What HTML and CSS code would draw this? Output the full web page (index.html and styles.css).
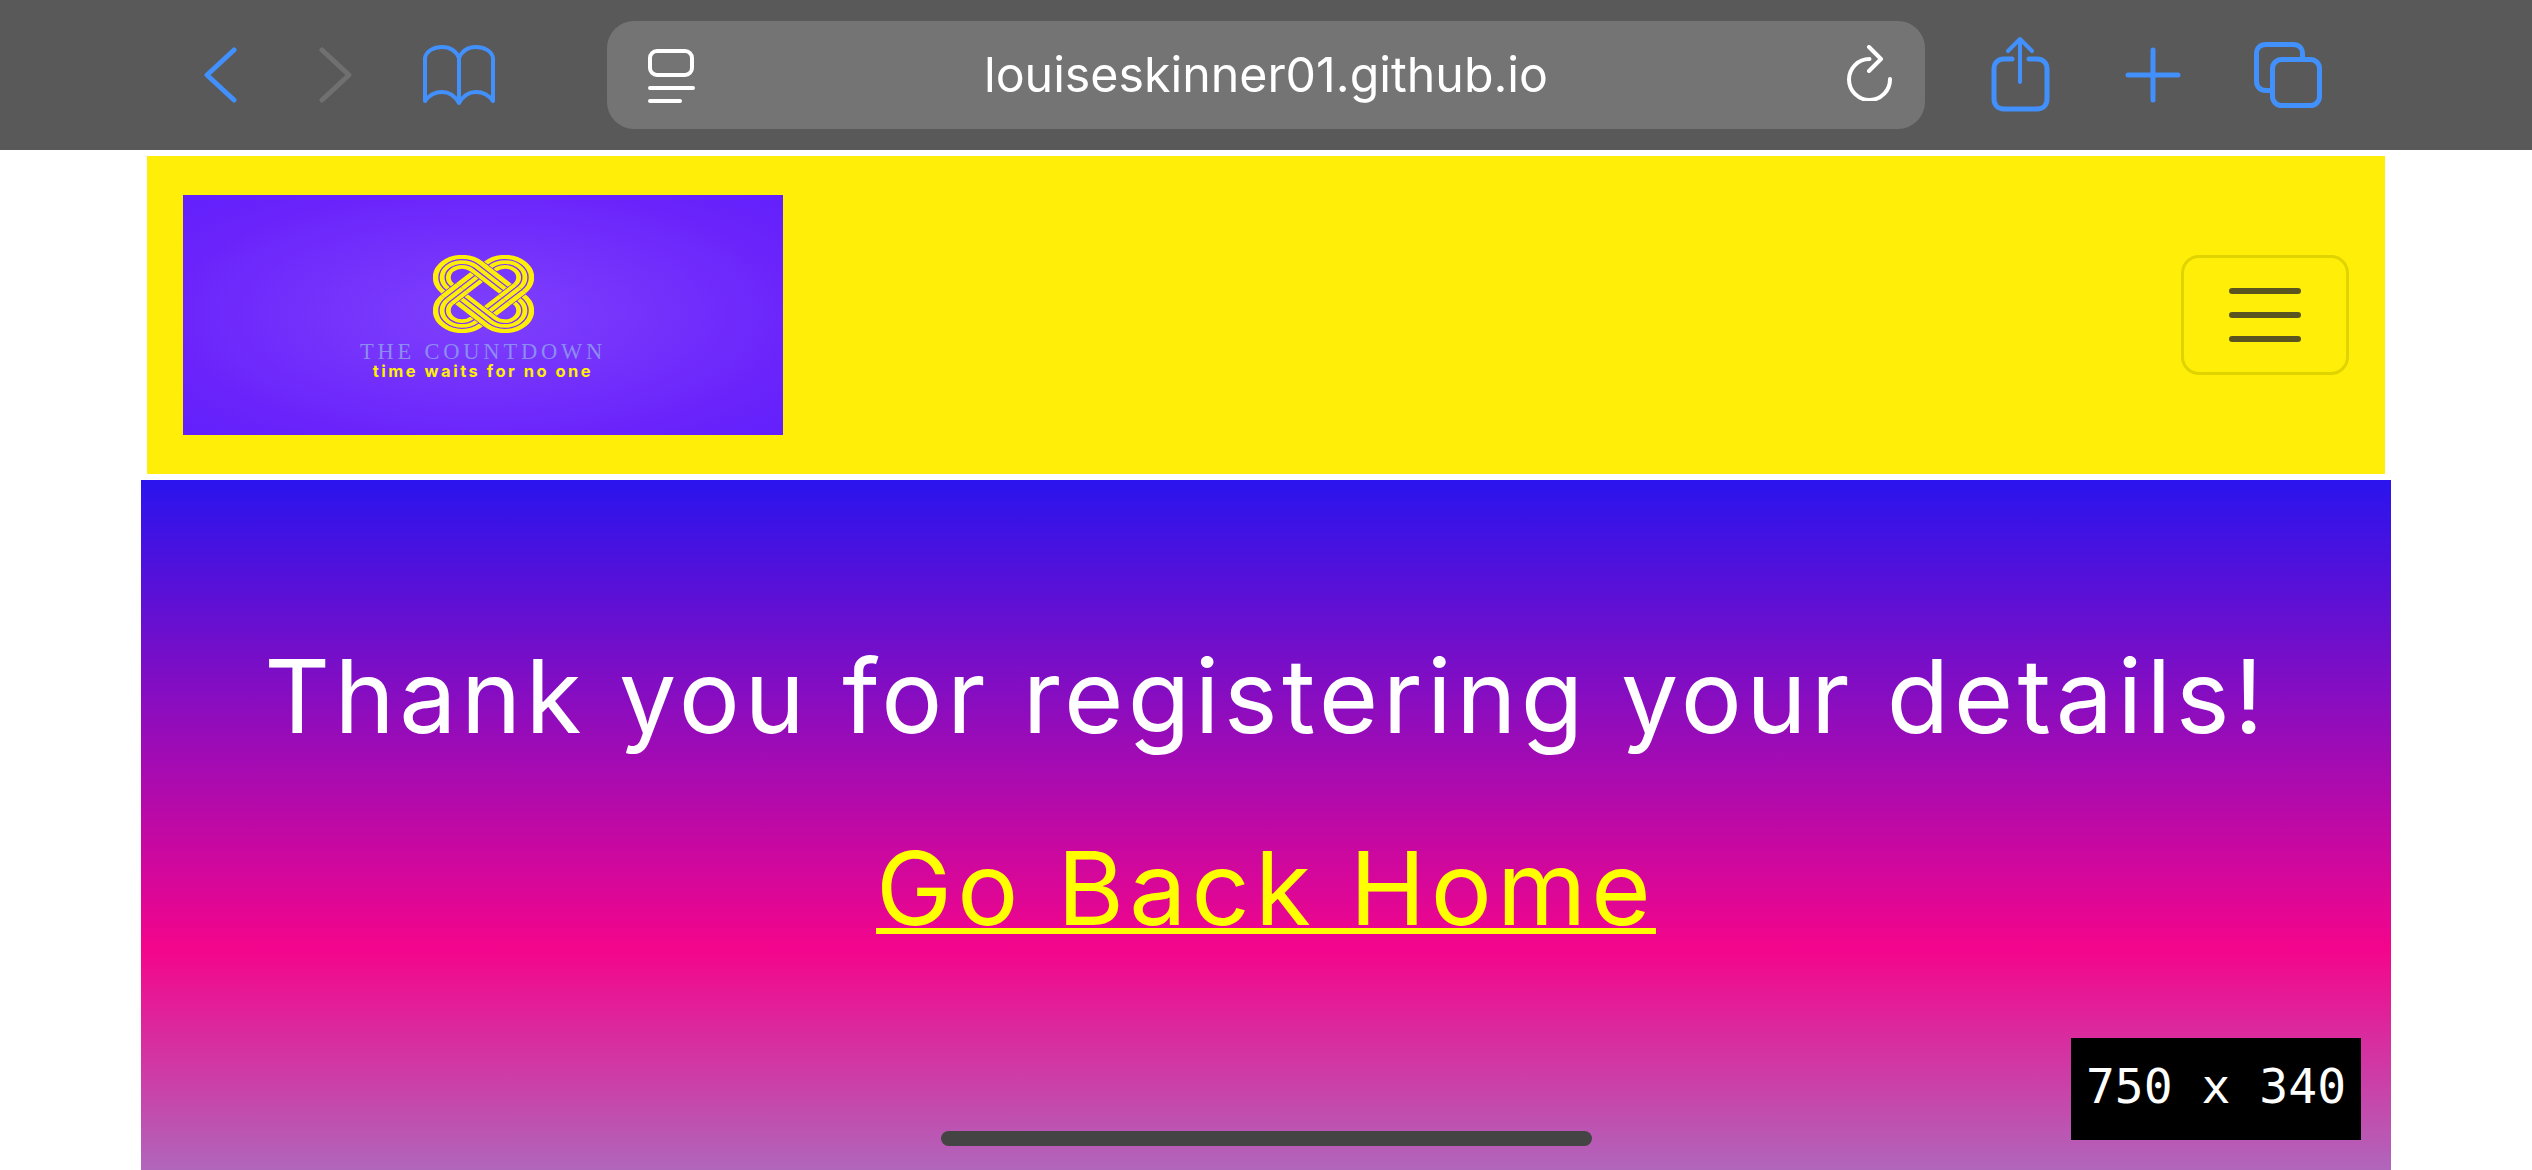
FILE: index.html
```html
<!DOCTYPE html>
<html lang="en">
<head>
<meta charset="utf-8">
<title>The Countdown</title>
<link rel="stylesheet" href="styles.css">
</head>
<body>
<div class="screen">
  <header class="toolbar">
    <div class="nav-icons">
      <svg class="ic ic-chev" viewBox="0 0 34 58"><path d="M30 4 3 29l27 25" class="blue-s"/></svg>
      <svg class="ic ic-chev" viewBox="0 0 34 58"><path d="M4 4l27 25L4 54" class="gray-s"/></svg>
      <svg class="ic ic-book" viewBox="0 0 74 62"><path class="blue-s thin" d="M37 59V14C34 7 29 3 20 3 12 3 4 7 3 14v43c5-7 10-9 17-9 8 0 13 4 17 11 4-7 9-11 17-11 7 0 12 2 17 9V14C70 7 62 3 54 3 45 3 40 7 37 14"/></svg>
    </div>
    <div class="urlbar">
      <svg class="ic ic-reader" viewBox="0 0 48 56"><rect x="2" y="4" width="42" height="24" rx="7" class="white-s"/><path d="M2 41h43M2 54h30" class="white-s"/></svg>
      <span class="url">louiseskinner01.github.io</span>
      <svg class="ic ic-reload" viewBox="0 0 48 56"><path d="M23.5 14A20.5 20.5 0 1 0 44 34" class="white-s"/><path d="M23 2l12 12-12 12" class="white-s"/></svg>
    </div>
    <div class="action-icons">
      <svg class="ic ic-share" viewBox="0 0 62 76"><path class="blue-s" d="M21 23H13C7 23 3 27 3 33v30c0 6 4 10 10 10h33c6 0 10-4 10-10V33c0-6-4-10-10-10h-8"/><path class="blue-s thin" d="M29 46V3M17 15 29 3l12 12"/></svg>
      <svg class="ic ic-plus" viewBox="0 0 56 56"><path class="blue-s" d="M28 3v50M3 28h50"/></svg>
      <svg class="ic ic-tabs" viewBox="0 0 68 70"><path class="blue-s" d="M16 50.500H12C6 50.500 2.500 47 2.500 41V13.500C2.500 8 6 4.500 12 4.500h27C45 4.500 48.500 8 48.500 13.500v6"/><rect class="blue-s" x="18.500" y="19.500" width="47" height="46" rx="9"/></svg>
    </div>
  </header>

  <div class="page">
    <nav class="navbar">
      <div class="logo">
        <svg class="knot" viewBox="0 0 100 100" preserveAspectRatio="none">
          <defs>
            <g id="band">
              <rect x="-20.150" y="-50.150" width="40.300" height="100.300" rx="20.150" class="halo"/>
              <rect x="-26.300" y="-56.300" width="52.600" height="112.600" rx="26.300" class="strand strand-outer"/>
              <rect x="-19.800" y="-49.800" width="39.600" height="99.600" rx="19.800" class="strand strand-mid"/>
              <rect x="-13.600" y="-43.600" width="27.200" height="87.200" rx="13.600" class="strand strand-inner"/>
            </g>
            <clipPath id="east-west"><path d="M63.400 50 78.400 35 93.400 50 78.400 65zM36.600 50 21.600 35 6.600 50 21.600 65z"/></clipPath>
          </defs>
          <use href="#band" transform="translate(50 50) rotate(45)"/>
          <use href="#band" transform="translate(50 50) rotate(-45)"/>
          <g clip-path="url(#east-west)"><use href="#band" transform="translate(50 50) rotate(45)"/></g>
        </svg>
        <div class="logo-title">THE COUNTDOWN</div>
        <div class="logo-tag">time waits for no one</div>
      </div>
      <button class="toggler" type="button" aria-label="Menu">
        <span class="bar"></span><span class="bar"></span><span class="bar"></span>
      </button>
    </nav>
    <main class="hero">
      <h1 class="hero-title">Thank you for registering your details!</h1>
      <a class="hero-link" href="#">Go Back Home</a>
      <div class="size-badge">750 x 340</div>
    </main>
  </div>
  <div class="home-bar"></div>
</div>
</body>
</html>
```
FILE: styles.css
```css
* { box-sizing: border-box; }
html, body { margin: 0; padding: 0; background: #fff; }
body { font-family: Inter, "Liberation Sans", sans-serif; }
.screen { position: relative; width: 2532px; height: 1170px; overflow: hidden; }

.toolbar { height: 150px; background: #595959; display: flex; align-items: center; }
.ic { display: block; fill: none; }
.blue-s, .gray-s, .white-s { fill: none; stroke-linecap: round; stroke-linejoin: round; }
.blue-s { stroke: #4190fb; stroke-width: 5; }
.blue-s.thin { stroke-width: 4; }
.gray-s { stroke: #707070; stroke-width: 5; }
.white-s { stroke: #fff; stroke-width: 4; }

.nav-icons { display: flex; align-items: center; margin-left: 204px; width: 403px; }
.ic-chev { width: 34px; height: 58px; }
.ic-chev + .ic-chev { margin-left: 80px; }
.ic-book { width: 74px; height: 62px; margin-left: 70px; }

.urlbar { width: 1318px; height: 108px; border-radius: 27px; background: #747474; display: flex; align-items: center; padding: 0 31px 0 41px; justify-content: space-between; }
.ic-reader { width: 48px; height: 56px; }
.ic-reload { width: 48px; height: 56px; margin-top: -4px; }
.url { color: #fff; font-size: 48.300px; line-height: 60px; font-weight: 400; margin-right: 10px; }

.action-icons { display: flex; align-items: center; margin-left: 66px; }
.ic-share { width: 62px; height: 76px; margin-top: -2px; }
.ic-plus { width: 56px; height: 56px; margin-left: 72px; }
.ic-tabs { width: 68px; height: 70px; margin-left: 73px; }

.page { padding: 6px 141px 0; }
.navbar { height: 318px; margin: 0 6px; background: #ffef08; display: flex; align-items: center; justify-content: space-between; padding: 0 36px; }
.logo { width: 600px; height: 240px; background: radial-gradient(ellipse at center, #7f40fc 0%, #6a24fb 75%, #6320fb 100%); display: flex; flex-direction: column; align-items: center; padding-top: 60px; }
.knot { width: 101px; height: 78px; display: block; }
.halo { fill: none; stroke: #7a37fb; stroke-width: 19.300; }
.strand { fill: none; stroke: #ffef08; }
.strand-outer { stroke-width: 5.400; }
.strand-mid { stroke-width: 4.800; }
.strand-inner { stroke-width: 4.800; }
.logo-title { font-family: "Liberation Serif", serif; font-size: 22.5px; line-height: 18px; margin-top: 10px; letter-spacing: 3.800px; color: #8c8cf0; }
.logo-tag { font-family: Inter, sans-serif; font-weight: 700; font-size: 16.5px; line-height: 16px; margin-top: 2px; letter-spacing: 2.500px; color: #ffef08; }

.toggler { width: 168px; height: 120px; padding: 0; border: 3px solid #e0d300; border-radius: 18px; background: transparent; display: flex; flex-direction: column; align-items: center; justify-content: center; gap: 18px; }
.bar { width: 72px; height: 6px; border-radius: 3px; background: #5a5520; }

.hero { position: relative; margin-top: 6px; height: 690px; background: linear-gradient(180deg, #2a14ee 0%, #f4058b 68%, #b066bb 100%); padding-top: 156px; text-align: center; display: flex; flex-direction: column; align-items: center; }
.hero-title { margin: 0; font-size: 102px; line-height: 120px; font-weight: 400; color: #fff; letter-spacing: 4.400px; white-space: nowrap; }
.hero-link { margin-top: 72px; font-size: 102px; line-height: 120px; font-weight: 400; color: #ff0; letter-spacing: 5.100px; text-decoration: underline; text-decoration-thickness: 6px; text-underline-offset: 3px; text-decoration-skip-ink: none; white-space: nowrap; }

.size-badge { position: absolute; right: 30px; top: 558px; width: 290px; height: 102px; background: #000; color: #fff; font-family: "DejaVu Sans Mono", monospace; font-size: 48px; line-height: 96px; text-align: center; }
.home-bar { position: absolute; left: 941px; top: 1131px; width: 651px; height: 15px; border-radius: 8px; background: #444; }
```
